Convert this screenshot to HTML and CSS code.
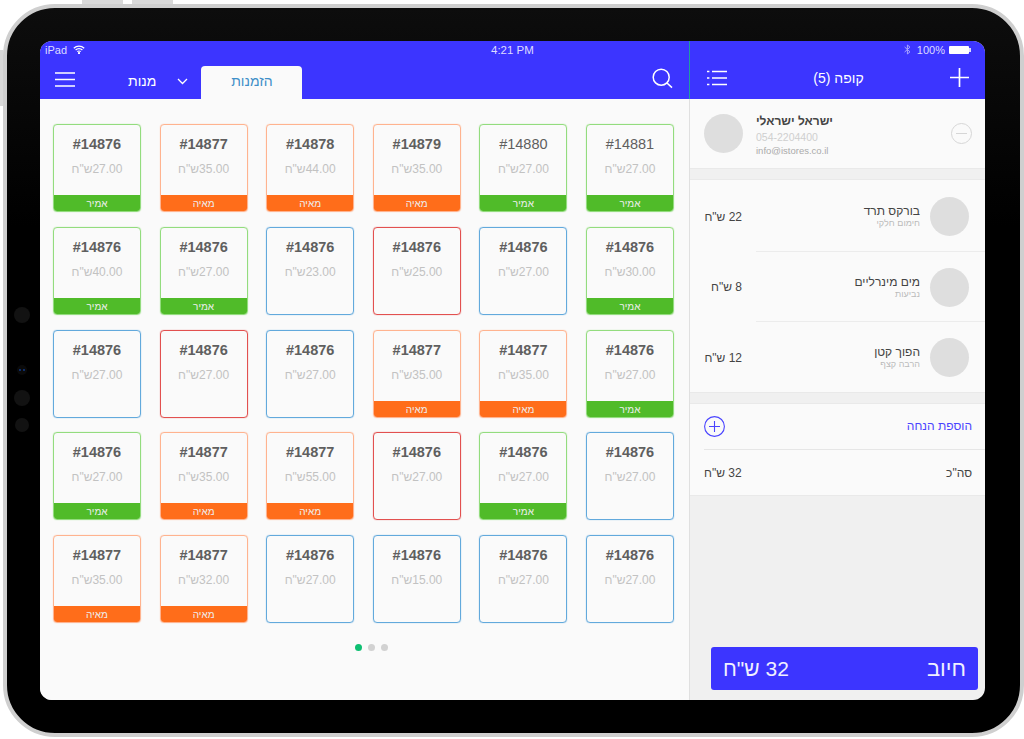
FILE: index.html
```html
<!DOCTYPE html>
<html lang="en">

<head>
    <meta charset="UTF-8">
    <meta name="viewport" content="width=device-width, initial-scale=1.0">
    <title>iPad POS</title>
    <link rel="stylesheet" href="styles.css">
</head>

<body>

    <div class="top-buttons">
        <span class="top-button"></span>
        <span class="top-button"></span>
    </div>

    <div class="device">
        <span class="side-button"></span>
        <div class="sensors">
            <span class="sensor"></span>
            <span class="camera"><i></i><i></i></span>
            <span class="sensor"></span>
            <span class="sensor small"></span>
        </div>

        <div class="screen">
            <!-- orders -->
            <div class="orders-pane">
                <div class="blue-head">
                    <div class="status">
                        <span>iPad</span>
                        <svg class="wifi" width="12" height="9" viewBox="0 0 12 9" fill="none" stroke="#fff" stroke-width="1.2">
                            <path d="M.8 3.2a7.4 7.4 0 0 1 10.4 0" />
                            <path d="M2.6 5a4.8 4.8 0 0 1 6.8 0" />
                            <path d="M4.3 6.7a2.4 2.4 0 0 1 3.4 0" />
                            <circle cx="6" cy="8" r=".5" fill="#fff" />
                        </svg>
                        <span class="time">4:21 PM</span>
                    </div>
                    <div class="tabs">
                        <svg class="icon-menu" width="20" height="15" viewBox="0 0 20 15" stroke="#fff" stroke-width="1.6">
                            <path d="M0 1h20M0 7.5h20M0 14h20" />
                        </svg>
                        <span class="tab-link" dir="rtl">מנות</span>
                        <svg class="chevron" width="11" height="7" viewBox="0 0 11 7" fill="none" stroke="#fff" stroke-width="1.3">
                            <path d="M1 1l4.5 4.5L10 1" />
                        </svg>
                        <span class="tab-active" dir="rtl">הזמנות</span>
                        <svg class="icon-search" width="21" height="21" viewBox="0 0 21 21" fill="none" stroke="#fff" stroke-width="1.5">
                            <circle cx="9.2" cy="9.2" r="8" />
                            <path d="M15 15l5 4.6" />
                        </svg>
                    </div>
                </div>

                <div class="orders-body">
                    <div class="grid">
                        <div class="card green"><h4>#14876</h4><p dir="rtl">27.00ש"ח</p><div class="tag" dir="rtl">אמיר</div></div>
                        <div class="card orange"><h4>#14877</h4><p dir="rtl">35.00ש"ח</p><div class="tag" dir="rtl">מאיה</div></div>
                        <div class="card orange"><h4>#14878</h4><p dir="rtl">44.00ש"ח</p><div class="tag" dir="rtl">מאיה</div></div>
                        <div class="card orange"><h4>#14879</h4><p dir="rtl">35.00ש"ח</p><div class="tag" dir="rtl">מאיה</div></div>
                        <div class="card green"><h4 class="plain">#14880</h4><p dir="rtl">27.00ש"ח</p><div class="tag" dir="rtl">אמיר</div></div>
                        <div class="card green"><h4 class="plain">#14881</h4><p dir="rtl">27.00ש"ח</p><div class="tag" dir="rtl">אמיר</div></div>

                        <div class="card green"><h4>#14876</h4><p dir="rtl">40.00ש"ח</p><div class="tag" dir="rtl">אמיר</div></div>
                        <div class="card green"><h4>#14876</h4><p dir="rtl">27.00ש"ח</p><div class="tag" dir="rtl">אמיר</div></div>
                        <div class="card blue"><h4>#14876</h4><p dir="rtl">23.00ש"ח</p></div>
                        <div class="card red"><h4>#14876</h4><p dir="rtl">25.00ש"ח</p></div>
                        <div class="card blue"><h4>#14876</h4><p dir="rtl">27.00ש"ח</p></div>
                        <div class="card green"><h4>#14876</h4><p dir="rtl">30.00ש"ח</p><div class="tag" dir="rtl">אמיר</div></div>

                        <div class="card blue"><h4>#14876</h4><p dir="rtl">27.00ש"ח</p></div>
                        <div class="card red"><h4>#14876</h4><p dir="rtl">27.00ש"ח</p></div>
                        <div class="card blue"><h4>#14876</h4><p dir="rtl">27.00ש"ח</p></div>
                        <div class="card orange"><h4>#14877</h4><p dir="rtl">35.00ש"ח</p><div class="tag" dir="rtl">מאיה</div></div>
                        <div class="card orange"><h4>#14877</h4><p dir="rtl">35.00ש"ח</p><div class="tag" dir="rtl">מאיה</div></div>
                        <div class="card green"><h4>#14876</h4><p dir="rtl">27.00ש"ח</p><div class="tag" dir="rtl">אמיר</div></div>

                        <div class="card green"><h4>#14876</h4><p dir="rtl">27.00ש"ח</p><div class="tag" dir="rtl">אמיר</div></div>
                        <div class="card orange"><h4>#14877</h4><p dir="rtl">35.00ש"ח</p><div class="tag" dir="rtl">מאיה</div></div>
                        <div class="card orange"><h4>#14877</h4><p dir="rtl">55.00ש"ח</p><div class="tag" dir="rtl">מאיה</div></div>
                        <div class="card red"><h4>#14876</h4><p dir="rtl">27.00ש"ח</p></div>
                        <div class="card green"><h4>#14876</h4><p dir="rtl">27.00ש"ח</p><div class="tag" dir="rtl">אמיר</div></div>
                        <div class="card blue"><h4>#14876</h4><p dir="rtl">27.00ש"ח</p></div>

                        <div class="card orange"><h4>#14877</h4><p dir="rtl">35.00ש"ח</p><div class="tag" dir="rtl">מאיה</div></div>
                        <div class="card orange"><h4>#14877</h4><p dir="rtl">32.00ש"ח</p><div class="tag" dir="rtl">מאיה</div></div>
                        <div class="card blue"><h4>#14876</h4><p dir="rtl">27.00ש"ח</p></div>
                        <div class="card blue"><h4>#14876</h4><p dir="rtl">15.00ש"ח</p></div>
                        <div class="card blue"><h4>#14876</h4><p dir="rtl">27.00ש"ח</p></div>
                        <div class="card blue"><h4>#14876</h4><p dir="rtl">27.00ש"ח</p></div>
                    </div>
                    <div class="dots">
                        <span class="dot current"></span>
                        <span class="dot"></span>
                        <span class="dot"></span>
                    </div>
                </div>
            </div>

            <!-- cart -->
            <div class="cart-pane">
                <div class="blue-head">
                    <div class="status status-right">
                        <svg class="bluetooth" width="7" height="11" viewBox="0 0 7 11" fill="none" stroke="#a9a6ff" stroke-width="1">
                            <path d="M.6 3l5.4 4.8L3.4 10V1L6 3.2.6 8" />
                        </svg>
                        <span>100%</span>
                        <span class="battery"></span>
                    </div>
                    <div class="cart-title">
                        <svg width="20" height="16" viewBox="0 0 20 16" stroke="#fff" stroke-width="1.6">
                            <path d="M5 1.5h15M5 8h15M5 14.5h15" />
                            <path d="M0 1.5h2.4M0 8h2.4M0 14.5h2.4" />
                        </svg>
                        <span dir="rtl">קופה (5)</span>
                        <svg width="19" height="19" viewBox="0 0 19 19" stroke="#fff" stroke-width="1.7">
                            <path d="M9.5 0v19M0 9.5h19" />
                        </svg>
                    </div>
                </div>

                <div class="customer">
                    <span class="avatar"></span>
                    <div class="customer-info">
                        <div class="customer-name" dir="rtl">ישראל ישראלי</div>
                        <div class="customer-phone">054-2204400</div>
                        <div class="customer-mail">info@istores.co.il</div>
                    </div>
                    <svg class="icon-minus" width="21" height="21" viewBox="0 0 21 21" fill="none" stroke="#d6d6d6" stroke-width="1">
                        <circle cx="10.5" cy="10.5" r="10" />
                        <path d="M5 10.5h11" />
                    </svg>
                </div>

                <div class="items">
                    <div class="item">
                        <span class="avatar"></span>
                        <div class="item-text" dir="rtl">
                            <div class="item-name">בורקס תרד</div>
                            <div class="item-sub">חימום חלקי</div>
                        </div>
                        <span class="item-price" dir="rtl">22 ש"ח</span>
                    </div>
                    <div class="item">
                        <span class="avatar"></span>
                        <div class="item-text" dir="rtl">
                            <div class="item-name">מים מינרליים</div>
                            <div class="item-sub">נביעות</div>
                        </div>
                        <span class="item-price" dir="rtl">8 ש"ח</span>
                    </div>
                    <div class="item">
                        <span class="avatar"></span>
                        <div class="item-text" dir="rtl">
                            <div class="item-name">הפוך קטן</div>
                            <div class="item-sub">הרבה קצף</div>
                        </div>
                        <span class="item-price" dir="rtl">12 ש"ח</span>
                    </div>
                </div>

                <div class="summary">
                    <div class="summary-row">
                        <svg width="21" height="21" viewBox="0 0 21 21" fill="none" stroke="#4a44ff" stroke-width="1.1">
                            <circle cx="10.5" cy="10.5" r="9.9" />
                            <path d="M10.5 5v11M5 10.5h11" />
                        </svg>
                        <span class="discount" dir="rtl">הוספת הנחה</span>
                    </div>
                    <div class="summary-row total">
                        <span dir="rtl">32 ש"ח</span>
                        <span dir="rtl">סה"כ</span>
                    </div>
                </div>

                <button class="pay" dir="rtl">
                    <span class="pay-label">חיוב</span>
                    <span>32 ש"ח</span>
                </button>
            </div>
        </div>
    </div>

</body>

</html>
```

FILE: styles.css
```css
body {
    margin: 0;
    background-color: #fff;
    font-family: "Liberation Sans", Arial, sans-serif;
    overflow: hidden;
}

/* device frame */
.top-buttons {
    display: flex;
    gap: 9px;
    height: 4px;
    padding-left: 82px;
}

.top-button {
    width: 41px;
    height: 4px;
    background: #d9d9d9;
}

.device {
    position: relative;
    box-sizing: border-box;
    width: 1021px;
    height: 733px;
    margin-left: 3px;
    padding: 33px 35px 33px 33px;
    background: linear-gradient(#0d0d0d, #000 30%);
    border: 4px solid #cfcfcf;
    border-radius: 52px;
}

.side-button {
    position: absolute;
    left: -7px;
    top: 42px;
    width: 3px;
    height: 56px;
    background: #d9d9d9;
}

.sensors {
    position: absolute;
    left: 7px;
    top: 299px;
    width: 16px;
    display: flex;
    flex-direction: column;
    align-items: center;
}

.sensor {
    width: 16px;
    height: 16px;
    border-radius: 50%;
    background: #121212;
    margin-top: 15px;
}

.sensor:first-child {
    margin-top: 0;
}

.sensor.small {
    width: 14px;
    height: 14px;
    margin-top: 12px;
}

.camera {
    display: flex;
    justify-content: center;
    gap: 2px;
    width: 10px;
    height: 10px;
    align-items: center;
    margin-top: 42px;
    border-radius: 50%;
    background: #0a0a0a;
}

.camera i {
    width: 2px;
    height: 2px;
    border-radius: 50%;
    background: #123a8a;
}

.screen {
    display: flex;
    height: 100%;
    border-radius: 12px;
    overflow: hidden;
    background: #f0f0f0;
}

/* shared header */
.blue-head {
    height: 58px;
    background: #3c35ff;
    color: #fff;
}

.status {
    display: flex;
    align-items: center;
    height: 17px;
    padding: 0 0 0 5px;
    font-size: 11px;
    color: #dcdbff;
}

.wifi {
    margin-left: 6px;
}

.time {
    margin-left: 406px;
    font-size: 11.5px;
}

.status-right {
    justify-content: flex-end;
    padding: 0 14px 0 0;
}

.bluetooth {
    margin-right: 6px;
}

.battery {
    position: relative;
    width: 20px;
    height: 8px;
    margin: 0 2px 0 4px;
    border-radius: 1px;
    background: #fff;
}

.battery::after {
    content: "";
    position: absolute;
    left: 20px;
    top: 2px;
    width: 2px;
    height: 4px;
    background: #dcdbff;
}

/* orders pane */
.orders-pane {
    display: flex;
    flex-direction: column;
    width: 650px;
    flex-shrink: 0;
    box-sizing: border-box;
}

.orders-pane .blue-head {
    border-right: 1px solid #1f9fa0;
}

.tabs {
    display: flex;
    align-items: flex-end;
    height: 41px;
}

.icon-menu {
    margin: 0 0 12px 15px;
}

.tab-link {
    margin: 0 0 10px 53px;
    font-size: 14px;
    color: #fff;
}

.chevron {
    margin: 0 0 14px 21px;
}

.tab-active {
    width: 101px;
    height: 33px;
    margin-left: 13px;
    background: #fafafa;
    border-radius: 4px 4px 0 0;
    color: #3f8fc8;
    font-size: 14px;
    line-height: 30px;
    text-align: center;
}

.icon-search {
    margin: 0 16px 10px auto;
}

.orders-body {
    flex: 1;
    box-sizing: border-box;
    padding: 25px 15px 0 13px;
    background: #fafafa;
    border-right: 1px solid #e0e0e0;
}

.grid {
    display: grid;
    grid-template-columns: repeat(6, 88px);
    grid-auto-rows: 88px;
    justify-content: space-between;
    row-gap: 14.75px;
}

.card {
    display: flex;
    flex-direction: column;
    box-sizing: border-box;
    border: 1px solid currentColor;
    border-radius: 4px;
    box-shadow: 0 0 1px currentColor;
    overflow: hidden;
    text-align: center;
}

.card.green { color: #93dc7e; }
.card.orange { color: #ffb38f; }
.card.blue { color: #62a9dc; }
.card.red { color: #e2504f; }

.card h4 {
    margin: 11px 0 0;
    font-size: 14.5px;
    line-height: 17px;
    font-weight: bold;
    color: #5f5f5f;
}

.card h4.plain {
    font-weight: normal;
}

.card p {
    margin: 8px 0 0;
    font-size: 12px;
    line-height: 17px;
    color: #c2c2c2;
}

.tag {
    margin: auto -1px -1px;
    height: 17px;
    line-height: 17px;
    font-size: 10px;
    color: #eee;
}

.green .tag { background: #50bb29; }
.orange .tag { background: #ff6d1a; }

.dots {
    display: flex;
    justify-content: center;
    gap: 6px;
    margin-top: 21px;
    padding-left: 16px;
}

.dot {
    width: 7px;
    height: 7px;
    border-radius: 50%;
    background: #d2d2d2;
}

.dot.current {
    background: #0fbf72;
}

/* cart pane */
.cart-pane {
    display: flex;
    flex-direction: column;
    flex: 1;
}

.cart-title {
    display: flex;
    align-items: center;
    justify-content: space-between;
    height: 41px;
    padding: 0 16px 2px 17px;
    box-sizing: border-box;
    font-size: 14px;
}

.avatar {
    width: 39px;
    height: 39px;
    flex-shrink: 0;
    border-radius: 50%;
    background: #dedede;
}

.customer {
    display: flex;
    align-items: center;
    height: 70px;
    padding: 0 13px 0 14px;
    box-sizing: border-box;
    background: #fafafa;
    border-bottom: 1px solid #e9e9e9;
}

.customer-info {
    flex: 1;
    align-self: flex-start;
    margin-left: 13px;
    padding-top: 14px;
}

.customer-name {
    text-align: left;
    font-size: 12px;
    font-weight: bold;
    line-height: 16px;
    color: #444;
    margin-bottom: 1px;
}

.customer-phone {
    font-size: 10.5px;
    line-height: 14px;
    color: #cfcfcf;
}

.customer-mail {
    font-size: 9.5px;
    line-height: 13px;
    color: #aaa;
}

.items {
    margin-top: 10px;
    background: #fafafa;
    border-top: 1px solid #e9e9e9;
    border-bottom: 1px solid #e9e9e9;
}

.item {
    position: relative;
    display: flex;
    flex-direction: row-reverse;
    align-items: center;
    height: 70.5px;
    padding: 3px 16px 0 14px;
    box-sizing: border-box;
}

.item + .item::before {
    content: "";
    position: absolute;
    top: 0;
    right: 0;
    left: 66px;
    border-top: 1px solid #ececec;
}

.item-text {
    flex: 1;
    margin-right: 10px;
}

.item-name {
    font-size: 12px;
    line-height: 14px;
    color: #444;
}

.item-sub {
    font-size: 9px;
    line-height: 11px;
    color: #bbb;
}

.item-price {
    width: 38px;
    font-size: 12px;
    color: #444;
}

.summary {
    margin-top: 10px;
    padding-left: 14px;
    background: #fafafa;
    border-top: 1px solid #e9e9e9;
    border-bottom: 1px solid #e9e9e9;
}

.summary-row {
    display: flex;
    align-items: center;
    justify-content: space-between;
    height: 45.5px;
    padding-right: 13px;
    box-sizing: border-box;
}

.total {
    height: 46px;
    border-top: 1px solid #e6e6e6;
    font-size: 12px;
    color: #444;
}

.discount {
    font-size: 12px;
    color: #4a44ff;
}

.pay {
    display: flex;
    align-items: center;
    justify-content: space-between;
    height: 43px;
    margin: auto 7px 10px 21px;
    padding: 0 12px;
    border: none;
    border-radius: 3px;
    background: #3c35ff;
    color: #f0f0ff;
    font-family: inherit;
    font-size: 21px;
}

.pay-label {
    font-size: 22px;
}
```
